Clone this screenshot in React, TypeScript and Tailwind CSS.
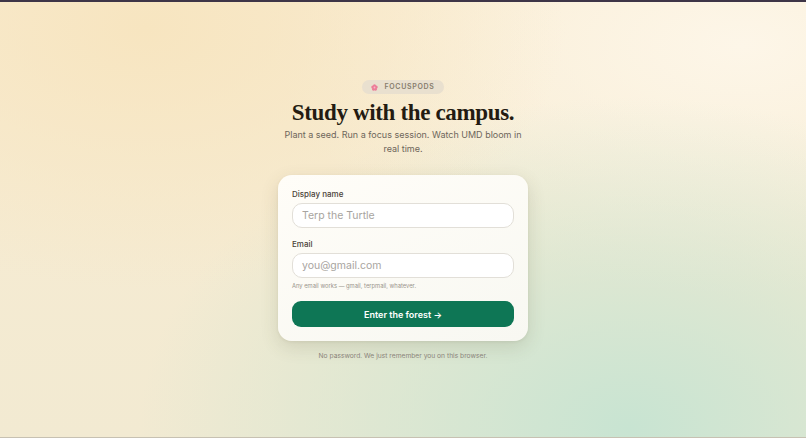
import { useState } from 'react'

export default function App() {
  const [name, setName] = useState('')
  const [email, setEmail] = useState('')

  return (
    <div className="h-[438px] w-full overflow-hidden flex flex-col bg-[#faefd9] font-['Inter','Liberation_Sans',sans-serif]">
      {/* top bar */}
      <div className="h-[2px] bg-[#3e3547] shrink-0" />
      <main className="relative flex-1 flex flex-col items-center justify-center pt-[3px] bg-[radial-gradient(ellipse_at_18%_6%,#f7e5c0_0%,transparent_45%),radial-gradient(ellipse_at_78%_98%,#c8e4d2_0%,transparent_55%),radial-gradient(ellipse_at_92%_10%,#fdf6e8_0%,transparent_45%),linear-gradient(180deg,#f9ecd2_0%,#f2ead2_100%)]">
        {/* badge */}
        <div className="flex items-center gap-[6px] rounded-full bg-[#e9e0cf] px-[9px] h-[14px]">
          <svg width="7" height="7" viewBox="0 0 10 10">
            <g fill="#ec7d98">
              <circle cx="5" cy="2.6" r="2.2" />
              <circle cx="7.4" cy="4.4" r="2.2" />
              <circle cx="6.5" cy="7.3" r="2.2" />
              <circle cx="3.5" cy="7.3" r="2.2" />
              <circle cx="2.6" cy="4.4" r="2.2" />
            </g>
            <circle cx="5" cy="5" r="1.3" fill="#f7b6c6" />
          </svg>
          <span className="text-[7px] font-semibold tracking-[0.1em] text-[#877d6d]">FOCUSPODS</span>
        </div>

        {/* headline */}
        <h1 className="mt-[5px] text-[23px] leading-[28px] font-bold tracking-[-0.015em] text-[#241b12] font-['Liberation_Serif','DejaVu_Serif',serif]">
          Study with the campus.
        </h1>
        <p className="mt-[1px] w-[245px] text-center text-[9px] leading-[14px] text-[#6e665b]">
          Plant a seed. Run a focus session. Watch UMD bloom in real time.
        </p>

        {/* card */}
        <div className="mt-[19px] w-[250px] rounded-[14px] bg-[linear-gradient(160deg,#fffdf8,#f8f8f2)] px-[14px] pt-[14px] pb-[14px] shadow-[0_6px_18px_rgba(90,80,50,0.16),0_1px_3px_rgba(90,80,50,0.08)]">
          <label className="block text-[8px] leading-[11px] font-medium text-[#4a4238]">Display name</label>
          <input
            value={name}
            onChange={(e) => setName(e.target.value)}
            placeholder="Terp the Turtle"
            className="mt-[3px] block w-full h-[25px] rounded-[10px] border border-[#e2dfd8] bg-white px-[9px] text-[10.5px] text-[#2a2118] placeholder:text-[#a8a4a0] outline-none"
          />

          <label className="mt-[11px] block text-[8px] leading-[11px] font-medium text-[#4a4238]">Email</label>
          <input
            value={email}
            onChange={(e) => setEmail(e.target.value)}
            placeholder="you@gmail.com"
            className="mt-[3px] block w-full h-[25px] rounded-[10px] border border-[#e2dfd8] bg-white px-[9px] text-[10.5px] text-[#2a2118] placeholder:text-[#a8a4a0] outline-none"
          />
          <p className="mt-[4px] text-[5.8px] leading-[8px] text-[#9a948b]">Any email works — gmail, terpmail, whatever.</p>

          <button className="mt-[11px] w-full h-[26px] rounded-[9px] bg-[#0e7655] text-white text-[9px] font-semibold">
            Enter the forest →
          </button>
        </div>

        <p className="mt-[10px] text-[6.7px] text-[#8a847a]">No password. We just remember you on this browser.</p>
      </main>
      <div className="h-[1px] bg-[#c7c1b2] shrink-0" />
    </div>
  )
}
